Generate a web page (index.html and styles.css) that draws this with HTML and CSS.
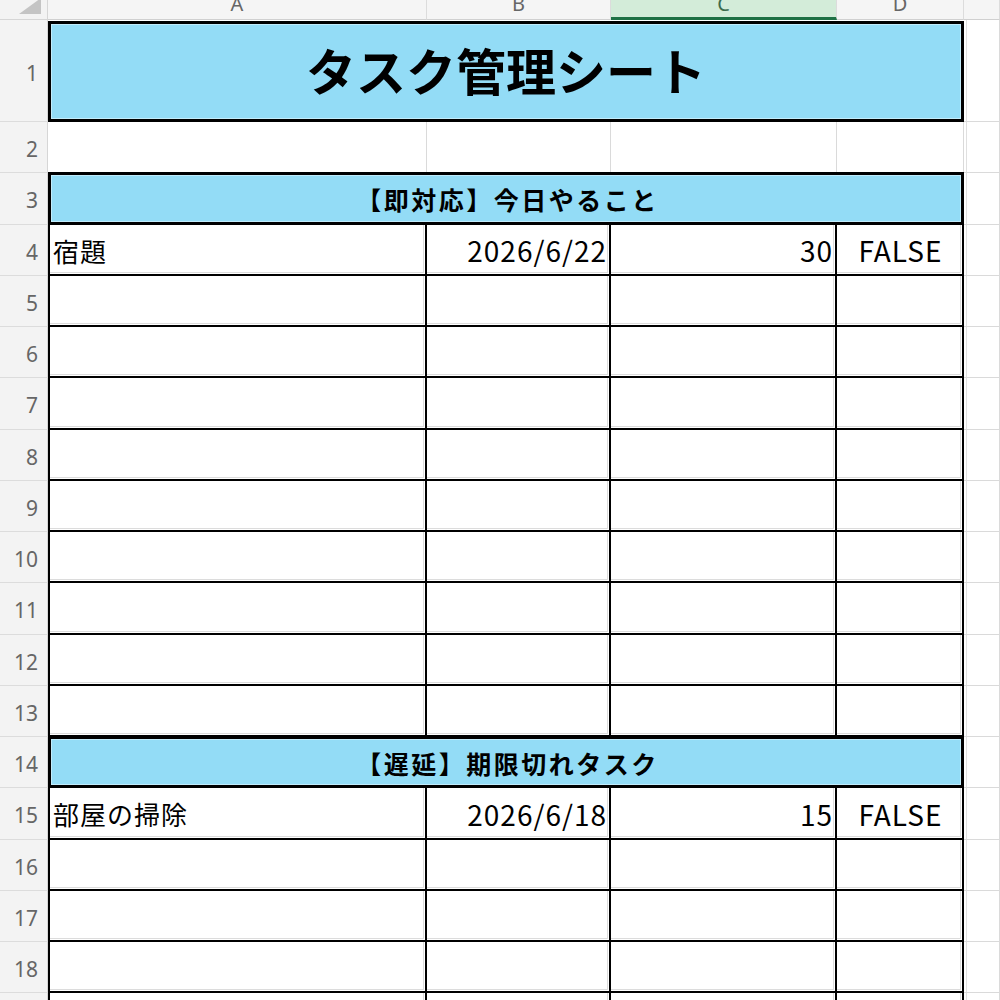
FILE: index.html
```html
<!DOCTYPE html>
<html lang="ja">
<head>
<meta charset="utf-8">
<title>タスク管理シート</title>
<link rel="stylesheet" href="styles.css">
</head>
<body>
<div class="sheet">
  <div class="corner"><div class="tri"></div></div>
  <div class="ch">A</div>
  <div class="ch">B</div>
  <div class="ch sel">C</div>
  <div class="ch">D</div>
  <div class="ch"></div>

  <div class="rh">1</div>
  <div class="title">タスク管理シート</div>
  <div class="e"></div>

  <div class="rh">2</div>
  <div class="c"></div><div class="c"></div><div class="c"></div><div class="c"></div><div class="e"></div>

  <div class="rh">3</div>
  <div class="sec">【即対応】今日やること</div>
  <div class="e"></div>

  <div class="rh">4</div>
  <div class="d first txt">宿題</div><div class="d num">2026/6/22</div><div class="d num">30</div><div class="d bool">FALSE</div><div class="e"></div>
  <div class="rh">5</div>
  <div class="d first"></div><div class="d"></div><div class="d"></div><div class="d"></div><div class="e"></div>
  <div class="rh">6</div>
  <div class="d first"></div><div class="d"></div><div class="d"></div><div class="d"></div><div class="e"></div>
  <div class="rh">7</div>
  <div class="d first"></div><div class="d"></div><div class="d"></div><div class="d"></div><div class="e"></div>
  <div class="rh">8</div>
  <div class="d first"></div><div class="d"></div><div class="d"></div><div class="d"></div><div class="e"></div>
  <div class="rh">9</div>
  <div class="d first"></div><div class="d"></div><div class="d"></div><div class="d"></div><div class="e"></div>
  <div class="rh">10</div>
  <div class="d first"></div><div class="d"></div><div class="d"></div><div class="d"></div><div class="e"></div>
  <div class="rh">11</div>
  <div class="d first"></div><div class="d"></div><div class="d"></div><div class="d"></div><div class="e"></div>
  <div class="rh">12</div>
  <div class="d first"></div><div class="d"></div><div class="d"></div><div class="d"></div><div class="e"></div>
  <div class="rh">13</div>
  <div class="d first"></div><div class="d"></div><div class="d"></div><div class="d"></div><div class="e"></div>

  <div class="rh">14</div>
  <div class="sec">【遅延】期限切れタスク</div>
  <div class="e"></div>

  <div class="rh">15</div>
  <div class="d first txt">部屋の掃除</div><div class="d num">2026/6/18</div><div class="d num">15</div><div class="d bool">FALSE</div><div class="e"></div>
  <div class="rh">16</div>
  <div class="d first"></div><div class="d"></div><div class="d"></div><div class="d"></div><div class="e"></div>
  <div class="rh">17</div>
  <div class="d first"></div><div class="d"></div><div class="d"></div><div class="d"></div><div class="e"></div>
  <div class="rh">18</div>
  <div class="d first"></div><div class="d"></div><div class="d"></div><div class="d"></div><div class="e"></div>
  <div class="rh">19</div>
  <div class="d first"></div><div class="d"></div><div class="d"></div><div class="d"></div><div class="e"></div>
</div>
</body>
</html>
```
FILE: styles.css
```css
html, body {
  margin: 0;
  padding: 0;
  background: #ffffff;
  overflow: hidden;
  width: 1000px;
  height: 1000px;
}

.sheet {
  display: grid;
  grid-template-columns: 48px 379px 184px 226px 127px 1fr;
  grid-template-rows: 20px 102px repeat(18, 51.25px);
  font-family: "Noto Sans CJK JP", "Noto Sans", sans-serif;
  color: #000;
  width: 1000px;
}

.corner {
  background: #f3f3f3;
  border-right: 1px solid #d6d6d6;
  border-bottom: 1px solid #d6d6d6;
  box-sizing: border-box;
  display: flex;
  justify-content: flex-end;
  align-items: flex-end;
  padding: 0 6px 5px 0;
}
.tri {
  width: 22px;
  height: 16px;
  background: #c4c4c4;
  clip-path: polygon(100% 0, 100% 100%, 0 100%);
}

.ch {
  background: #f5f5f5;
  border-right: 1px solid #dcdcdc;
  border-bottom: 1px solid #d0d0d0;
  box-sizing: border-box;
  overflow: hidden;
  text-align: center;
  font-family: "Noto Sans", sans-serif;
  font-size: 20px;
  line-height: 8px;
  color: #666;
}
.ch.sel {
  background: #d3ecd9;
  border-bottom: 3px solid #1e7145;
  color: #3d6b4d;
}

.rh {
  background: #f3f3f3;
  border-right: 1px solid #d6d6d6;
  border-bottom: 1px solid #dcdcdc;
  box-sizing: border-box;
  display: flex;
  align-items: center;
  justify-content: flex-end;
  padding: 4px 9px 0 0;
  font-family: "Noto Sans", sans-serif;
  font-size: 21px;
  color: #666;
}

.c {
  border-right: 1px solid #dadada;
  border-bottom: 1px solid #dadada;
  box-sizing: border-box;
}
.e {
  border-right: 1px solid #dadada;
  border-bottom: 1px solid #dadada;
  box-shadow: inset 2px 0 0 #fff, inset 3px 0 0 #e0e0e0;
  box-sizing: border-box;
}

.title,
.sec {
  grid-column: 2 / 6;
  background: #93dcf6;
  border: 3px solid #000;
  box-shadow: inset 0 0 0 1px #c2ecfb;
  box-sizing: border-box;
  display: flex;
  align-items: center;
  justify-content: center;
  font-weight: 700;
}
.title {
  margin-top: 1px;
  font-size: 50px;
  padding-bottom: 6px;
}
.sec {
  margin-top: -1px;
  font-size: 25px;
  letter-spacing: 2.5px;
  padding: 1px 0 0 3px;
}

.d {
  border-right: 2px solid #000;
  border-bottom: 2px solid #000;
  box-shadow: inset -1px -1px 0 #fff, inset -2px -2px 0 #dcdcdc;
  box-sizing: border-box;
  display: flex;
  align-items: center;
  font-size: 26px;
  padding-top: 2px;
  white-space: nowrap;
}
.d.first {
  border-left: 2px solid #000;
}
.txt {
  justify-content: flex-start;
  padding-left: 3px;
  letter-spacing: 1px;
}
.num {
  justify-content: flex-end;
  padding-right: 2px;
  font-size: 28px;
  letter-spacing: 1px;
}
.bool {
  justify-content: center;
  font-size: 28px;
  letter-spacing: 1px;
  padding-left: 2px;
}
```
